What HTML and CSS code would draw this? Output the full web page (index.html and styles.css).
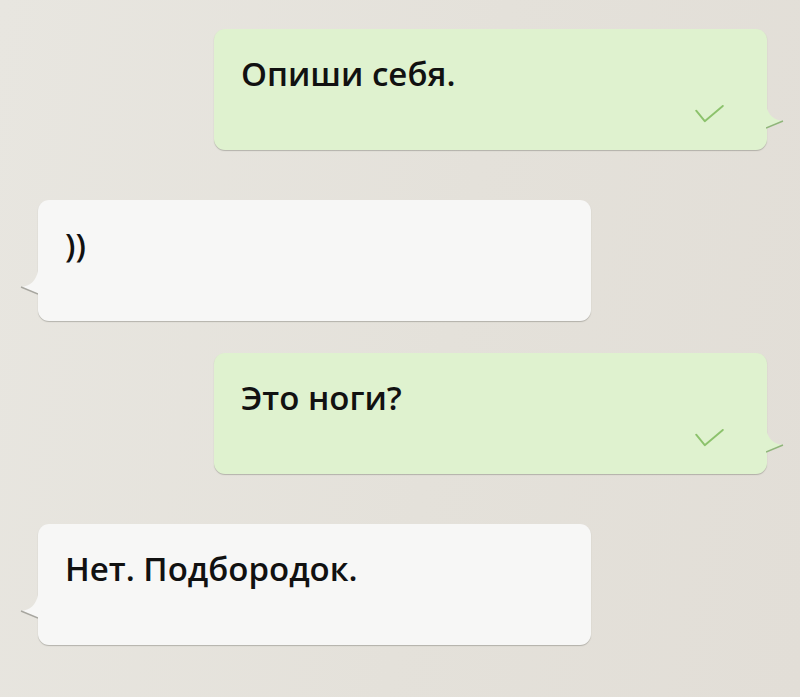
FILE: index.html
```html
<!DOCTYPE html>
<html>
<head>
    <title>Чат</title>
    <link rel="stylesheet" href="styles.css">
</head>
<body>
    <div class="chat">
        <div class="msg out">
            <div class="text">Опиши себя.</div>
            <svg class="check" viewBox="0 0 30 20" width="29" height="19"><path d="M1 6 L10 17 L29 1" /></svg>
            <svg class="tail" viewBox="0 0 18 24" width="18" height="24"><path class="fill" d="M0 0 C2 10 8 15 17 16 L0 23 Z" /><path class="edge" d="M17 16 L0 23" /></svg>
        </div>
        <div class="msg in gap-big">
            <div class="text">))</div>
            <svg class="tail" viewBox="0 0 18 24" width="18" height="24"><path class="fill" d="M18 0 C16 10 10 15 1 16 L18 23 Z" /><path class="edge" d="M1 16 L18 23" /></svg>
        </div>
        <div class="msg out gap-small">
            <div class="text">Это ноги?</div>
            <svg class="check" viewBox="0 0 30 20" width="29" height="19"><path d="M1 6 L10 17 L29 1" /></svg>
            <svg class="tail" viewBox="0 0 18 24" width="18" height="24"><path class="fill" d="M0 0 C2 10 8 15 17 16 L0 23 Z" /><path class="edge" d="M17 16 L0 23" /></svg>
        </div>
        <div class="msg in gap-big">
            <div class="text">Нет. Подбородок.</div>
            <svg class="tail" viewBox="0 0 18 24" width="18" height="24"><path class="fill" d="M18 0 C16 10 10 15 1 16 L18 23 Z" /><path class="edge" d="M1 16 L18 23" /></svg>
        </div>
    </div>
</body>
</html>
```

FILE: styles.css
```css
html, body {
    margin: 0;
    height: 100%;
}
body {
    font-family: "Open Sans", "Noto Sans", sans-serif;
    background: linear-gradient(100deg, #e8e6e0 0%, #e4e1da 55%, #e2ded7 100%);
    overflow: hidden;
}
.chat {
    display: flex;
    flex-direction: column;
    padding-top: 29px;
}
.msg {
    position: relative;
    box-sizing: border-box;
    height: 121px;
    width: 553px;
    padding: 25px 28px 0 27px;
    border-radius: 11px;
    display: flex;
    flex-direction: column;
    box-shadow: 0 1px 1px rgba(90, 90, 80, 0.35);
}
.gap-big { margin-top: 50px; }
.gap-small { margin-top: 32px; }
.out {
    margin-left: 214px;
    background: #dff2cf;
}
.in {
    margin-left: 38px;
    background: #f7f7f6;
}
.text {
    font-size: 33px;
    font-weight: 600;
    line-height: 40px;
    color: #111;
}
.check {
    align-self: flex-end;
    margin: 11px 15px 0 0;
}
.check path {
    fill: none;
    stroke: #8cc26c;
    stroke-width: 2;
    stroke-linecap: round;
    stroke-linejoin: round;
}
.tail {
    position: absolute;
    top: 76px;
}
.out .tail {
    right: -17px;
}
.out .tail .fill { fill: #dff2cf; }
.out .tail .edge { stroke: #8fb57a; stroke-width: 1.4; }
.in .tail {
    left: -18px;
    top: 71px;
}
.in .tail .fill { fill: #f7f7f6; }
.in .tail .edge { stroke: #a7a69f; stroke-width: 1.4; }
```
